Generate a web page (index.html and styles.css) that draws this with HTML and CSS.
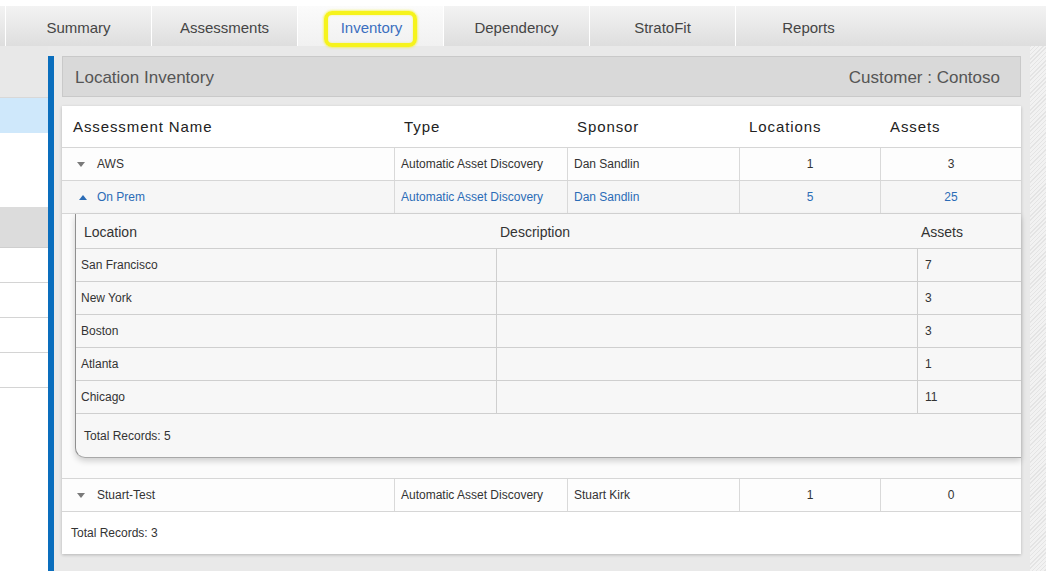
FILE: index.html
```html
<!DOCTYPE html>
<html>
<head>
<meta charset="utf-8">
<title>Location Inventory</title>
<link rel="stylesheet" href="styles.css">
</head>
<body>
<div class="topstrip"></div>
<nav class="tabs">
  <div class="tab stub"></div>
  <div class="tab">Summary</div>
  <div class="tab">Assessments</div>
  <div class="tab active"><span class="hl">Inventory</span></div>
  <div class="tab">Dependency</div>
  <div class="tab">StratoFit</div>
  <div class="tab last">Reports</div>
  <div class="tab-fill"></div>
</nav>
<div class="layout">
  <aside class="side">
    <div class="side-top"></div>
    <div class="side-sel"></div>
    <div class="side-blank"></div>
    <div class="side-head"></div>
    <div class="side-row"></div>
    <div class="side-row"></div>
    <div class="side-row"></div>
    <div class="side-row"></div>
  </aside>
  <div class="accent"></div>
  <main class="main">
    <header class="title-bar">
      <span>Location Inventory</span>
      <span>Customer : Contoso</span>
    </header>
    <section class="card">
      <div class="grid head">
        <div class="hc">Assessment Name</div>
        <div class="hc">Type</div>
        <div class="hc">Sponsor</div>
        <div class="hc">Locations</div>
        <div class="hc">Assets</div>
      </div>
      <div class="grid row">
        <div class="c name"><span class="tri down"></span>AWS</div>
        <div class="c">Automatic Asset Discovery</div>
        <div class="c">Dan Sandlin</div>
        <div class="c num">1</div>
        <div class="c num">3</div>
      </div>
      <div class="grid row open">
        <div class="c name"><span class="tri up"></span>On Prem</div>
        <div class="c">Automatic Asset Discovery</div>
        <div class="c">Dan Sandlin</div>
        <div class="c num">5</div>
        <div class="c num">25</div>
      </div>
      <div class="detail">
        <div class="sub">
          <div class="sgrid shead">
            <div class="sh first">Location</div>
            <div class="sh">Description</div>
            <div class="sh">Assets</div>
          </div>
          <div class="sgrid srow"><div class="sc">San Francisco</div><div class="sc"></div><div class="sc val">7</div></div>
          <div class="sgrid srow"><div class="sc">New York</div><div class="sc"></div><div class="sc val">3</div></div>
          <div class="sgrid srow"><div class="sc">Boston</div><div class="sc"></div><div class="sc val">3</div></div>
          <div class="sgrid srow"><div class="sc">Atlanta</div><div class="sc"></div><div class="sc val">1</div></div>
          <div class="sgrid srow"><div class="sc">Chicago</div><div class="sc"></div><div class="sc val">11</div></div>
          <div class="sfoot">Total Records: 5</div>
        </div>
      </div>
      <div class="grid row">
        <div class="c name"><span class="tri down"></span>Stuart-Test</div>
        <div class="c">Automatic Asset Discovery</div>
        <div class="c">Stuart Kirk</div>
        <div class="c num">1</div>
        <div class="c num">0</div>
      </div>
      <div class="foot">Total Records: 3</div>
    </section>
  </main>
  <div class="scroll"></div>
</div>
</body>
</html>
```

FILE: styles.css
```css
* { box-sizing: border-box; }
html, body { margin: 0; padding: 0; }
body {
  width: 1046px;
  height: 571px;
  overflow: hidden;
  background: #ffffff;
  font-family: "Liberation Sans", Arial, sans-serif;
  color: #333;
}
.topstrip { height: 6px; background: #fff; }

.tabs {
  display: flex;
  height: 40px;
  background: linear-gradient(#f3f3f3, #dedede);
}
.tab {
  width: 146px;
  border-right: 1px solid #ffffff;
  display: flex;
  align-items: center;
  justify-content: center;
  padding-top: 2px;
  font-size: 15px;
  color: #454545;
  background: linear-gradient(#f3f3f3, #dedede);
}
.tab.stub { width: 6px; }
.tab.last { border-right: none; width: 145px; }
.tab.active {
  background: linear-gradient(#fbfbfb, #f1f1f1);
  color: #3b6fbf;
}
.tab-fill { flex: 1; }
.hl {
  border: 4px solid #f6f31c;
  border-radius: 8px;
  padding: 4px 11px 7px 13px;
  margin-top: 3px;
  box-shadow: 0 0 2px 1px rgba(246, 243, 28, 0.55), inset 0 0 2px rgba(246, 243, 28, 0.5);
}

.layout {
  display: flex;
  height: 525px;
  background: #e9e9e9;
}
.side {
  width: 48px;
  display: flex;
  flex-direction: column;
  background: #fff;
}
.side-top { height: 52px; background: #e8e8e8; border-bottom: 1px solid #d8d8d8; }
.side-sel { height: 35px; background: #cfe8fb; }
.side-blank { height: 74px; background: #fff; }
.side-head { height: 41px; background: #dcdcdc; border-bottom: 1px solid #cfcfcf; }
.side-row { height: 35px; border-bottom: 1px solid #d4d4d4; background: #fff; }

.accent {
  width: 6px;
  margin-top: 10px;
  background: #0a6ebd;
}
.main {
  width: 976px;
  padding: 10px 9px 0 8px;
  display: flex;
  flex-direction: column;
}
.title-bar {
  height: 41px;
  background: #d9d9d9;
  border: 1px solid #c9c9c9;
  display: flex;
  align-items: center;
  justify-content: space-between;
  padding: 2px 20px 0 12px;
  font-size: 17px;
  color: #555;
}
.card {
  margin-top: 9px;
  background: #fff;
  box-shadow: 0 1px 3px rgba(0,0,0,0.22);
  height: 448px;
}
.grid {
  display: grid;
  grid-template-columns: 332px 173px 172px 141px 141px;
}
.head {
  height: 42px;
  border-bottom: 1px solid #d6d6d6;
}
.hc {
  display: flex;
  align-items: center;
  padding-left: 10px;
  font-size: 15px;
  letter-spacing: 0.9px;
  color: #222;
}
.hc:first-child { padding-left: 11px; }
.row {
  height: 33px;
  border-bottom: 1px solid #d6d6d6;
  background: #fdfdfd;
}
.row.open { background: #f6f6f6; color: #2b6cb6; }
.row.open .c { color: #2b6cb6; }
.c {
  display: flex;
  align-items: center;
  padding-left: 6px;
  font-size: 12px;
  color: #333;
  border-left: 1px solid #d9d9d9;
}
.c.name { border-left: none; padding-left: 15px; }
.c.num { justify-content: center; padding-left: 0; }
.tri {
  width: 0; height: 0;
  border-left: 4.5px solid transparent;
  border-right: 4.5px solid transparent;
  margin-right: 12px;
}
.tri.down { border-top: 5px solid #7a7a7a; }
.tri.up { border-bottom: 5px solid #2b6cb6; margin-left: 2px; margin-right: 10px; }

.detail {
  height: 265px;
  padding: 0 0 21px 13px;
  background: #fbfbfb;
  border-bottom: 1px solid #d6d6d6;
}
.sub {
  height: 244px;
  background: #f7f7f7;
  border-left: 1px solid #8f8f8f;
  border-bottom: 1px solid #a8a8a8;
  border-bottom-left-radius: 10px;
  box-shadow: 0 3px 6px rgba(0,0,0,0.18);
}
.sgrid {
  display: grid;
  grid-template-columns: 420px 421px 104px;
}
.shead {
  height: 35px;
  border-bottom: 1px solid #cfcfcf;
}
.sh {
  display: flex;
  align-items: center;
  padding-left: 4px;
  padding-top: 2px;
  font-size: 14px;
  color: #333;
}
.sh.first { padding-left: 8px; }
.srow {
  height: 33px;
  border-bottom: 1px solid #cfcfcf;
}
.sc {
  display: flex;
  align-items: center;
  padding-left: 5px;
  font-size: 12px;
  color: #333;
  border-left: 1px solid #cfcfcf;
}
.sc:first-child { border-left: none; }
.sc.val { padding-left: 7px; }
.sfoot {
  height: 43px;
  display: flex;
  align-items: center;
  padding-left: 8px;
  font-size: 12px;
  color: #333;
}
.foot {
  height: 42px;
  display: flex;
  align-items: center;
  padding-left: 9px;
  font-size: 12px;
  color: #333;
}
.scroll {
  width: 16px;
  background-color: #f2f2f2;
  background-image: repeating-linear-gradient(135deg, #e4e4e4 0 1px, transparent 1px 3px);
}
```
